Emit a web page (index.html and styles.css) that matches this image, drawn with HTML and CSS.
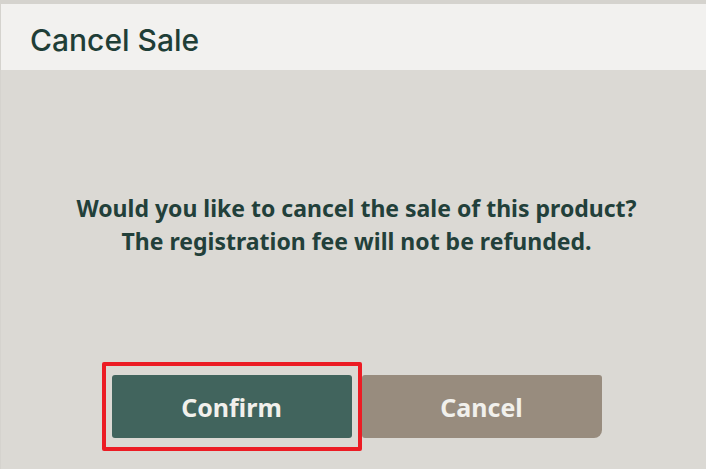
FILE: index.html
```html
<!DOCTYPE html>
<html lang="en">
  <head>
    <meta charset="UTF-8" />
    <meta name="viewport" content="width=device-width, initial-scale=1.0" />
    <title>Cancel Sale</title>
    <link rel="stylesheet" href="styles.css">
  </head>
  <body>
    <div class="dialog">
      <div class="dialog-header">
        <h1>Cancel Sale</h1>
      </div>
      <div class="dialog-body">
        <p class="message">
          Would you like to cancel the sale of this product?<br />
          The registration fee will not be refunded.
        </p>
        <div class="actions">
          <button type="button" class="btn confirm-btn focused">Confirm</button>
          <button type="button" class="btn cancel-btn">Cancel</button>
        </div>
      </div>
    </div>
  </body>
</html>
```

FILE: styles.css
```css
html,
body {
  margin: 0;
  height: 100%;
  overflow: hidden;
}
body {
  background-color: #d5d3ce;
  font-family: "Noto Sans", sans-serif;
}
.dialog {
  width: 711px;
  height: 465px;
  margin: 4px 0 0 1px;
  background-color: #dbd9d4;
}
.dialog-header {
  height: 66px;
  background-color: #f2f1ef;
  padding: 5px 0 0 29px;
  box-sizing: border-box;
  display: flex;
  align-items: center;
}
.dialog-header h1 {
  margin: 0;
  font-family: Inter, sans-serif;
  font-weight: 500;
  font-size: 30px;
  color: #1f3e37;
}
.dialog-body {
  display: flex;
  flex-direction: column;
  align-items: center;
}
.message {
  margin: 122px 0 0;
  font-size: 23px;
  font-weight: 700;
  line-height: 33px;
  text-align: center;
  color: #22403a;
}
.actions {
  display: flex;
  gap: 10px;
  margin-top: 117px;
}
.btn {
  width: 240px;
  height: 63px;
  border: none;
  font-family: "Noto Sans", sans-serif;
  font-size: 25px;
  font-weight: 700;
  color: #f1f0ec;
  cursor: pointer;
}
.confirm-btn {
  background-color: #41645d;
  border-radius: 3px;
}
.cancel-btn {
  background-color: #988c7e;
  border-radius: 3px 3px 8px 3px;
}
.focused {
  position: relative;
}
.focused::after {
  content: "";
  position: absolute;
  top: -13px;
  left: -10px;
  right: -10px;
  bottom: -13px;
  border: 4px solid #ec1c24;
  border-radius: 2px;
}
```
